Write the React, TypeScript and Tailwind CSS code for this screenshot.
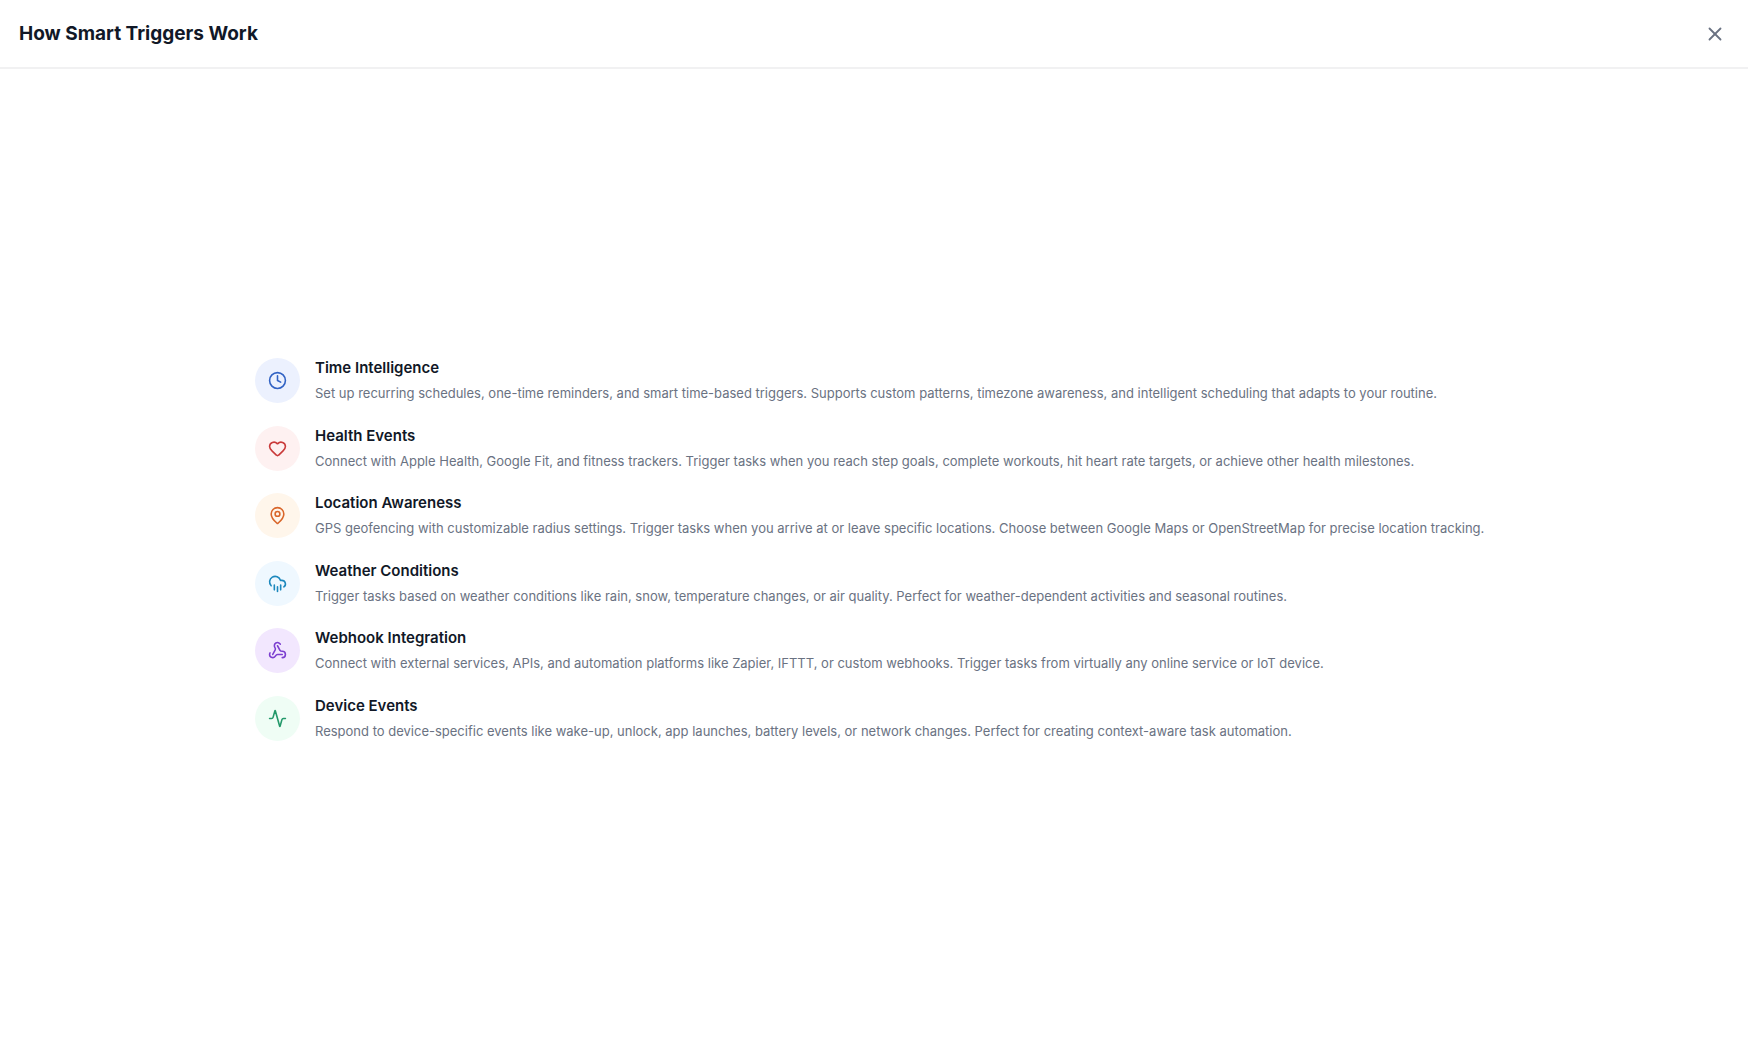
import React from "react";
import { Activity, Clock, CloudRain, Heart, MapPin, Webhook, X, type LucideIcon } from "lucide-react";

type Trigger = { icon: LucideIcon; color: string; title: string; text: string };

const triggers: Trigger[] = [
  { icon: Clock, color: "bg-[#ecf1fe] text-[#3263c4]", title: "Time Intelligence", text: "Set up recurring schedules, one-time reminders, and smart time-based triggers. Supports custom patterns, timezone awareness, and intelligent scheduling that adapts to your routine." },
  { icon: Heart, color: "bg-[#fef1f1] text-[#c93a3a]", title: "Health Events", text: "Connect with Apple Health, Google Fit, and fitness trackers. Trigger tasks when you reach step goals, complete workouts, hit heart rate targets, or achieve other health milestones." },
  { icon: MapPin, color: "bg-[#fff6eb] text-[#d9662a]", title: "Location Awareness", text: "GPS geofencing with customizable radius settings. Trigger tasks when you arrive at or leave specific locations. Choose between Google Maps or OpenStreetMap for precise location tracking." },
  { icon: CloudRain, color: "bg-[#eff8ff] text-[#1c88bd]", title: "Weather Conditions", text: "Trigger tasks based on weather conditions like rain, snow, temperature changes, or air quality. Perfect for weather-dependent activities and seasonal routines." },
  { icon: Webhook, color: "bg-[#f2e7fe] text-[#7c3fd0]", title: "Webhook Integration", text: "Connect with external services, APIs, and automation platforms like Zapier, IFTTT, or custom webhooks. Trigger tasks from virtually any online service or IoT device." },
  { icon: Activity, color: "bg-[#effdf5] text-[#23996a]", title: "Device Events", text: "Respond to device-specific events like wake-up, unlock, app launches, battery levels, or network changes. Perfect for creating context-aware task automation." },
];

export default function App() {
  return (
    <div className="flex min-h-screen flex-col bg-white font-['Inter',sans-serif] text-[#111827]">
      <header className="flex items-center justify-between border-b-2 border-[#f1f1f2] py-3 pr-3 pl-[19px]">
        <h1 className="text-[19px] leading-[29px] font-bold">How Smart Triggers Work</h1>
        <button type="button" aria-label="Close" className="flex size-[43px] items-center justify-center text-gray-500">
          <X size={22} />
        </button>
      </header>
      <main className="flex grow items-center justify-center px-6 pt-8 pb-[62px]">
        <ul className="flex min-h-[383px] w-full max-w-[1238px] flex-col justify-between gap-[22px]">
          {triggers.map(({ icon: Icon, color, title, text }) => (
            <li key={title} className="flex items-start gap-[15px]">
              <span className={`flex size-[45px] shrink-0 items-center justify-center rounded-full ${color}`}>
                <Icon size={19} />
              </span>
              <div>
                <h2 className="text-[15px] leading-5 font-semibold">{title}</h2>
                <p className="mt-[5px] text-[13px] leading-5 text-gray-500">{text}</p>
              </div>
            </li>
          ))}
        </ul>
      </main>
    </div>
  );
}
